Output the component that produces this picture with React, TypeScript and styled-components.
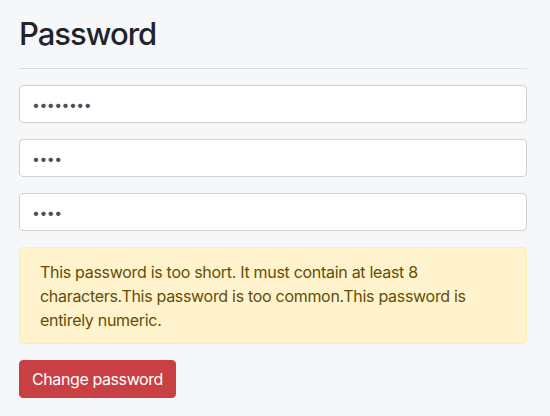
import React from 'react';
import styled, { createGlobalStyle } from 'styled-components';

const GlobalStyle = createGlobalStyle`
	body {
		margin: 0;
		background: #f6f7f9;
		font-family: Inter, "Noto Sans", sans-serif;
		color: #212529;
	}
`;

export default function App() {
	return (
		<>
			<GlobalStyle />
			<Page>
				<Title>Password</Title>
				<Rule />
				<Form onSubmit={e => e.preventDefault()}>
					<Field type="password" defaultValue="12345678" />
					<Field type="password" defaultValue="1234" />
					<Field type="password" defaultValue="1234" />
					<Alert>
						This password is too short. It must contain at least 8 characters.This password is too common.This password is
						entirely numeric.
					</Alert>
					<div>
						<Button type="submit">Change password</Button>
					</div>
				</Form>
			</Page>
		</>
	);
}

const Page = styled.div`
	width: 508px;
	padding: 15px 19px 16px;
`;

const Title = styled.h2`
	margin: 0;
	font-size: 31px;
	font-weight: 500;
	line-height: 1.2;
	letter-spacing: -1px;
`;

const Rule = styled.hr`
	margin: 16px 0 16px;
	border: 0;
	border-top: 1px solid #dadde1;
`;

const Form = styled.form`
	display: flex;
	flex-direction: column;
	gap: 16px;
`;

const Field = styled.input`
	box-sizing: border-box;
	width: 100%;
	height: 38px;
	padding: 6px 12px;
	font-family: inherit;
	font-size: 14px;
	color: #495057;
	background: #fff;
	border: 1px solid #ced1d6;
	border-radius: 4px;
	letter-spacing: -0.5px;
`;

const Alert = styled.div`
	padding: 12px 20px 11px;
	font-size: 16px;
	line-height: 24px;
	letter-spacing: -0.3px;
	color: #664d03;
	background: #fff3cd;
	border: 1px solid #ffecb5;
	border-radius: 4px;
`;

const Button = styled.button`
	height: 38px;
	padding: 6px 12px;
	font-family: inherit;
	font-size: 16px;
	letter-spacing: -0.4px;
	color: #fff;
	background: #c84043;
	border: 1px solid #c84043;
	border-radius: 4px;
	cursor: pointer;
`;
